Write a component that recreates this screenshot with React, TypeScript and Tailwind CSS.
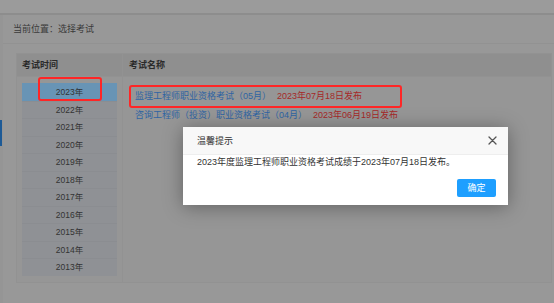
import React from "react";

const years = [2023, 2022, 2021, 2020, 2019, 2018, 2017, 2016, 2015, 2014, 2013];

export default function App() {
  return (
    <div className="relative w-[554px] h-[303px] overflow-hidden bg-[#989898] font-['Liberation_Sans','Noto_Sans_CJK_SC',sans-serif] text-[9px] leading-[12px] text-[#2e2e2e]">
      {/* top band */}
      <div className="h-[13px] bg-[#9b9b9b]" />
      <div className="h-[2px] bg-[#8d8d8d]" />
      <div className="flex h-[288px]">
        {/* left sidebar edge */}
        <div className="w-[3px] bg-[#959595] pt-[105px]">
          <div className="w-[2px] h-[26px] bg-[#1d5a96]" />
        </div>
        {/* panel */}
        <div className="flex-1 flex flex-col bg-[#989898]">
          <div className="h-[29px] flex items-center pl-[10px] border-b border-[#929292] text-[#3a3a3a]">
            当前位置：选择考试
          </div>
          <div className="pt-[9px] pl-[13px] pr-[2px]">
            <div className="border border-[#929292]">
              {/* header */}
              <div className="flex h-[23px] bg-[#8f8f8f] border-b border-[#929292] font-bold text-[#2a2a2a]">
                <div className="w-[106px] flex items-center pl-[5px] border-r border-[#929292]">考试时间</div>
                <div className="flex-1 flex items-center pl-[6px]">考试名称</div>
              </div>
              {/* body */}
              <div className="flex bg-[#969696]">
                <div className="w-[106px] border-r border-[#929292] pl-[5px] pr-[5px] pt-[6px] pb-[6px]">
                  <div className="bg-[#8f9195] text-[8.5px] text-[#333]">
                    {years.map((y, i) => (
                      <div
                        key={y}
                        className={
                          i === 0
                            ? "h-[17.5px] flex items-center justify-center bg-[#6894b5]"
                            : "h-[17.5px] flex items-center justify-center border-t border-[#8b8d91]"
                        }
                      >
                        {y}年
                      </div>
                    ))}
                  </div>
                </div>
                <div className="flex-1 pl-[12px] pt-[10px] leading-[19px]">
                  <div className="flex">
                    <span className="text-[#2f64a3]">监理工程师职业资格考试（05月）</span>
                    <span className="ml-[6px] text-[#a52828]">2023年07月18日发布</span>
                  </div>
                  <div className="flex">
                    <span className="text-[#2f64a3]">咨询工程师（投资）职业资格考试（04月）</span>
                    <span className="ml-[6px] text-[#a52828]">2023年06月19日发布</span>
                  </div>
                </div>
              </div>
            </div>
          </div>
        </div>
      </div>

      {/* annotation boxes */}
      <div className="absolute left-[38px] top-[77px] w-[64px] h-[24px] border-2 border-[#ff2626] rounded-[3px] z-20" />
      <div className="absolute left-[129px] top-[85px] w-[273px] h-[23px] border-2 border-[#ff2626] rounded-[3px] z-20" />

      {/* dialog */}
      <div className="absolute left-[183px] top-[127px] w-[325px] h-[78px] bg-white z-30 shadow-[0_2px_18px_rgba(0,0,0,0.35)] flex flex-col">
        <div className="h-[28px] bg-[#f8f8f8] border-b border-[#eeeeee] flex items-center justify-between pl-[14px] pr-[11px] text-[#333]">
          <span>温馨提示</span>
          <svg width="9" height="9" viewBox="0 0 9 9">
            <path d="M1 1 L8 8 M8 1 L1 8" stroke="#555" strokeWidth="1.3" strokeLinecap="round" />
          </svg>
        </div>
        <div className="pl-[14px] pt-[1px] leading-[12px] text-[#333]">
          2023年度监理工程师职业资格考试成绩于2023年07月18日发布。
        </div>
        <div className="mt-[11px] pr-[12px] flex justify-end">
          <div className="w-[39px] h-[18px] bg-[#1e9fff] rounded-[2px] text-white flex items-center justify-center">
            确定
          </div>
        </div>
      </div>
    </div>
  );
}
